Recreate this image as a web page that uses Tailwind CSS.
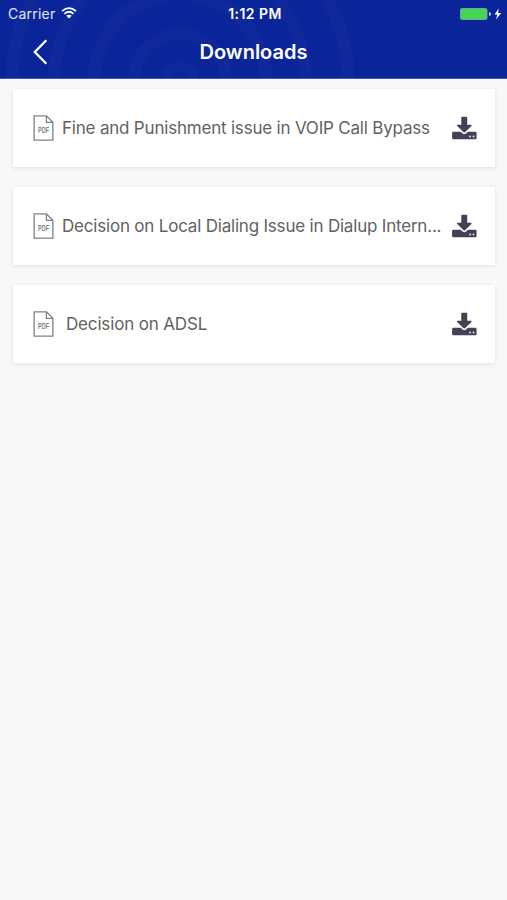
<!DOCTYPE html>
<html lang="en">
<head>
<meta charset="utf-8">
<meta name="viewport" content="width=device-width">
<title>Downloads</title>
<script src="https://cdn.jsdelivr.net/npm/@tailwindcss/browser@4"></script>
</head>
<body class="min-h-screen bg-[#f8f8f8] font-['Inter',sans-serif]">
<svg class="hidden">
  <symbol id="pdf" viewBox="0 0 20 25">
    <path d="M1 .8H12.8L19 7V24.2H1ZM12.8 .8V7H19" fill="none" stroke="#808087" stroke-width="1.25"/>
    <text x="4.800" y="17.600" font-family="Liberation Sans, sans-serif" font-weight="700" font-size="8" textLength="10.5" lengthAdjust="spacingAndGlyphs" fill="#808087">PDF</text>
  </symbol>
  <symbol id="download" viewBox="0 0 25 24">
    <path d="M10.2 .7H14.3Q15.2 .7 15.2 1.6V8.8H19Q20.3 9 19.4 10L13 16.2Q12.3 16.8 11.6 16.2L5.2 10Q4.300 9 5.500 8.800H9.300V1.600Q9.300 .7 10.200 .7Z" fill="#424156"/>
    <path d="M1.400 15.700H8.600L10.600 17.600Q12.300 18.900 14 17.600L16 15.700H23.300Q24.600 15.700 24.600 17V22Q24.600 23.300 23.300 23.300H1.400Q.1 23.300 .1 22V17Q.1 15.700 1.400 15.700Z" fill="#424156"/>
    <circle cx="18" cy="20.400" r="1" fill="#dcdce2"/><circle cx="21.500" cy="20.400" r="1" fill="#dcdce2"/>
  </symbol>
</svg>
<header class="relative h-[79px] overflow-hidden border-b border-[#4458b5] bg-[#0a2499] text-white">
  <svg class="absolute inset-0" width="507" height="79" fill="none" stroke="#fff" stroke-opacity=".025">
    <circle cx="180" cy="80" r="168" stroke-width="13"/><circle cx="180" cy="80" r="126" stroke-width="12"/><circle cx="180" cy="80" r="86" stroke-width="13"/><circle cx="180" cy="80" r="46" stroke-width="12"/><circle cx="180" cy="80" r="14" stroke-width="10"/>
  </svg>
  <div class="relative grid h-[27px] grid-cols-[1fr_auto_1fr] items-center pr-[5px] pl-[8px]">
    <div class="flex items-center gap-[6px]">
      <span class="text-[14px] leading-[27px] tracking-[0.22px] text-white/90">Carrier</span>
      <svg class="-mt-[2px]" width="16" height="12" viewBox="0 0 16 12" fill="none" stroke="#fff" stroke-width="1.700"><path d="M1 4.200Q8-2 15 4.200M3.400 6.800Q8 2.700 12.600 6.800"/><path d="M5.300 8.800Q8 6.500 10.700 8.800L8 11.600Z" fill="#fff" stroke="none"/></svg>
    </div>
    <span class="text-[14px] leading-[27px] font-semibold tracking-[0.42px]">1:12 PM</span>
    <svg class="justify-self-end" width="42" height="14" viewBox="0 0 42 14"><rect x=".5" y="1.500" width="26.500" height="11" rx="1.500" fill="#43d551" stroke="#75a5b5" stroke-width=".9"/><path d="M29 5Q31 5.500 31 7T29 9Z" fill="#c9d0ed"/><path d="M38.700 1.500L34.500 7.600H37.300L36 12.500L41.200 6.100H38.100Z" fill="#fff"/></svg>
  </div>
  <div class="relative grid h-[49px] grid-cols-[1fr_auto_1fr] items-center">
    <svg class="ml-[33px]" width="15" height="26" viewBox="0 0 15 26" fill="none" stroke="#fff" stroke-width="2.300"><path d="M13.300 1.200L1.800 13L13.300 24.800"/></svg>
    <h1 class="text-[20px] leading-6 font-semibold">Downloads</h1>
  </div>
</header>
<main class="flex flex-col gap-[20px] pt-[10px] pr-[12px] pl-[13px]">
  <article class="flex h-[78px] items-center bg-white pr-[18px] pl-[20px] shadow-[0_1px_4px_rgba(0,0,0,0.10)]">
    <svg class="h-[26px] w-[21px] shrink-0"><use href="#pdf"/></svg>
    <span class="ml-[8px] flex-1 text-[17px] leading-6 tracking-[-0.2px] whitespace-nowrap text-[#626262]">Fine and Punishment issue in VOIP Call Bypass</span>
    <svg class="h-[24px] w-[25px] shrink-0"><use href="#download"/></svg>
  </article>
  <article class="flex h-[78px] items-center bg-white pr-[18px] pl-[20px] shadow-[0_1px_4px_rgba(0,0,0,0.10)]">
    <svg class="h-[26px] w-[21px] shrink-0"><use href="#pdf"/></svg>
    <span class="ml-[8px] flex-1 text-[17px] leading-6 tracking-[-0.2px] whitespace-nowrap text-[#626262]">Decision on Local Dialing Issue in Dialup Intern...</span>
    <svg class="h-[24px] w-[25px] shrink-0"><use href="#download"/></svg>
  </article>
  <article class="flex h-[78px] items-center bg-white pr-[18px] pl-[20px] shadow-[0_1px_4px_rgba(0,0,0,0.10)]">
    <svg class="h-[26px] w-[21px] shrink-0"><use href="#pdf"/></svg>
    <span class="ml-[12px] flex-1 text-[17px] leading-6 tracking-[-0.16px] whitespace-nowrap text-[#626262]">Decision on ADSL</span>
    <svg class="h-[24px] w-[25px] shrink-0"><use href="#download"/></svg>
  </article>
</main>
</body>
</html>
